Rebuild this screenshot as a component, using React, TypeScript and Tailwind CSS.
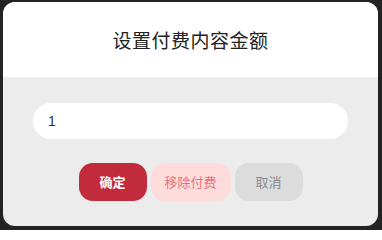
export default function App() {
  return (
    <main
      className="w-[382px] h-[230px] bg-[#232323] pt-[2px] pl-[3px] pr-[4px] pb-[4px]"
      style={{ fontFamily: '"Noto Sans CJK SC", "Noto Sans", sans-serif' }}
    >
      <div className="w-full h-full rounded-[12px] overflow-hidden flex flex-col bg-[#ececec]">
        <header className="h-[75px] bg-white flex items-center justify-center">
          <h1 className="text-[19px] leading-none text-[#222] font-normal tracking-[0.5px]">
            设置付费内容金额
          </h1>
        </header>
        <div className="flex-1 flex flex-col items-center pt-[26px]">
          <div className="w-[315px] h-[36px] rounded-full bg-white flex items-center pl-[15px]">
            <span
              className="text-[14px] text-[#333]"
              style={{ fontFamily: '"Liberation Sans", "Noto Sans CJK SC", sans-serif' }}
            >
              1
            </span>
          </div>
          <div className="mt-[24px] flex gap-[4px]">
            <button className="w-[68px] h-[38px] rounded-[14px] bg-[#c12b3b] text-white text-[13px] font-bold">
              确定
            </button>
            <button className="w-[80px] h-[38px] rounded-[14px] bg-[#ffdcdc] text-[#e5727b] text-[13px]">
              移除付费
            </button>
            <button className="w-[68px] h-[38px] rounded-[14px] bg-[#dcdcdc] text-[#8a8a8a] text-[13px]">
              取消
            </button>
          </div>
        </div>
      </div>
    </main>
  );
}
